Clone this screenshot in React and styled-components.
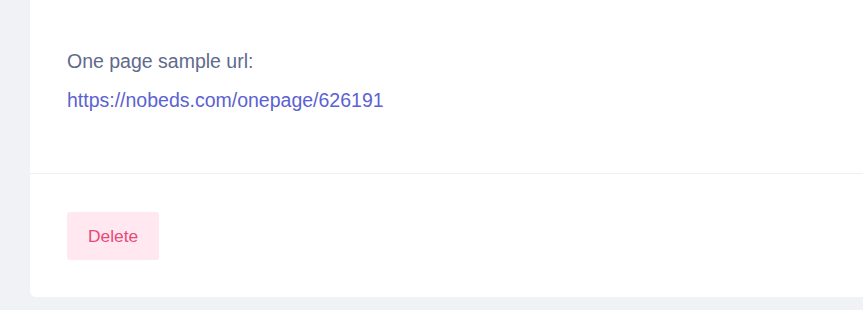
import React from "react"
import styled, { createGlobalStyle } from "styled-components"

const GlobalStyle = createGlobalStyle`
  html, body {
    margin: 0;
    padding: 0;
    background: #f1f2f6;
    font-family: "Liberation Sans", Arial, sans-serif;
    overflow: hidden;
  }
`

const Page = styled.div`
  padding: 0 0 13px 30px;
`

const Card = styled.div`
  background: #ffffff;
  border-radius: 0 0 0 6px;
`

const Body = styled.div`
  padding: 48px 37px 59px;
  border-bottom: 1px solid #eff0f4;
`

const Label = styled.div`
  font-size: 19.5px;
  line-height: 27px;
  color: #5f6a8c;
  margin-bottom: 12px;
`

const Link = styled.a`
  display: block;
  font-size: 19.5px;
  line-height: 27px;
  color: #5b62d2;
  text-decoration: none;
`

const Footer = styled.div`
  padding: 38px 37px 37px;
`

const DangerButton = styled.button`
  height: 48px;
  padding: 0 21px;
  border: none;
  border-radius: 3px;
  background: #ffe8ef;
  color: #e8497a;
  font-family: "Liberation Sans", Arial, sans-serif;
  font-size: 17.4px;
  cursor: pointer;
`

export default function App() {
  return (
    <>
      <GlobalStyle />
      <Page>
        <Card>
          <Body>
            <Label>One page sample url:</Label>
            <Link href="#">https://nobeds.com/onepage/626191</Link>
          </Body>
          <Footer>
            <DangerButton>Delete</DangerButton>
          </Footer>
        </Card>
      </Page>
    </>
  )
}
